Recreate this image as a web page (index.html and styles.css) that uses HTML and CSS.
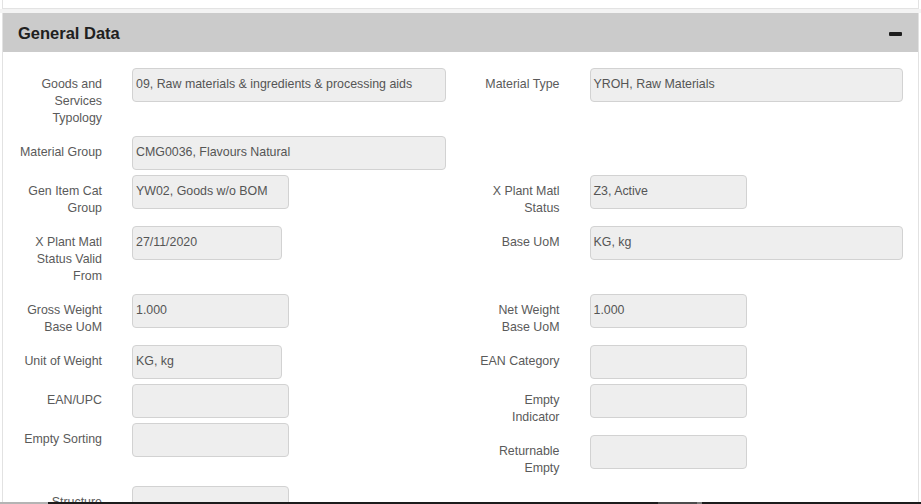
FILE: index.html
```html
<!DOCTYPE html>
<html lang="en">
<head>
<meta charset="utf-8">
<title>General Data</title>
<link rel="stylesheet" href="styles.css">
</head>
<body>
<div class="page">
  <div class="top-box"></div>
  <div class="band"></div>
  <section class="panel">
    <header class="panel-head">
      <h2 class="panel-title">General Data</h2>
      <span class="collapse-icon" aria-label="Collapse"></span>
    </header>
    <div class="panel-body">
      <div class="form-row">
        <div class="field">
          <label class="field-label">Goods and Services Typology</label>
          <div class="control"><div class="input">09, Raw materials &amp; ingredients &amp; processing aids</div></div>
        </div>
        <div class="field">
          <label class="field-label">Material Type</label>
          <div class="control"><div class="input">YROH, Raw Materials</div></div>
        </div>
      </div>
      <div class="form-row">
        <div class="field">
          <label class="field-label">Material Group</label>
          <div class="control"><div class="input">CMG0036, Flavours Natural</div></div>
        </div>
        <div></div>
      </div>
      <div class="form-row">
        <div class="field">
          <label class="field-label">Gen Item Cat Group</label>
          <div class="control"><div class="input w157">YW02, Goods w/o BOM</div></div>
        </div>
        <div class="field">
          <label class="field-label">X Plant Matl Status</label>
          <div class="control"><div class="input w157">Z3, Active</div></div>
        </div>
      </div>
      <div class="form-row">
        <div class="field">
          <label class="field-label">X Plant Matl Status Valid From</label>
          <div class="control"><div class="input w150">27/11/2020</div></div>
        </div>
        <div class="field">
          <label class="field-label">Base UoM</label>
          <div class="control"><div class="input">KG, kg</div></div>
        </div>
      </div>
      <div class="form-row">
        <div class="field">
          <label class="field-label">Gross Weight Base UoM</label>
          <div class="control"><div class="input w157">1.000</div></div>
        </div>
        <div class="field">
          <label class="field-label">Net Weight Base UoM</label>
          <div class="control"><div class="input w157">1.000</div></div>
        </div>
      </div>
      <div class="form-row">
        <div class="field">
          <label class="field-label">Unit of Weight</label>
          <div class="control"><div class="input w150">KG, kg</div></div>
        </div>
        <div class="field">
          <label class="field-label">EAN Category</label>
          <div class="control"><div class="input w157"></div></div>
        </div>
      </div>
      <div class="form-row">
        <div class="stack">
          <div class="field">
            <label class="field-label">EAN/UPC</label>
            <div class="control"><div class="input w157"></div></div>
          </div>
          <div class="field">
            <label class="field-label">Empty Sorting</label>
            <div class="control"><div class="input w157"></div></div>
          </div>
        </div>
        <div class="stack">
          <div class="field">
            <label class="field-label">Empty Indicator</label>
            <div class="control"><div class="input w157"></div></div>
          </div>
          <div class="field">
            <label class="field-label">Returnable Empty</label>
            <div class="control"><div class="input w157"></div></div>
          </div>
        </div>
      </div>
      <div class="form-row">
        <div class="field">
          <label class="field-label">Structure Category</label>
          <div class="control"><div class="input w157"></div></div>
        </div>
        <div></div>
      </div>
    </div>
  </section>
  <div class="status-bar">
    <span class="sb-left"></span>
    <span class="sb-dark"><span class="sb-thumb"></span></span>
  </div>
</div>
</body>
</html>
```

FILE: styles.css
```css
* { box-sizing: border-box; }

html, body {
  margin: 0;
  padding: 0;
  background: #ffffff;
}

.page {
  width: 921px;
  height: 504px;
  display: flex;
  flex-direction: column;
  overflow: hidden;
  font-family: "Liberation Sans", Arial, sans-serif;
}

.top-box {
  height: 9px;
  margin-left: 2px;
  width: 917px;
  border: 1px solid #e3e3e3;
  border-top: none;
  background: #ffffff;
  flex: none;
}

.band {
  height: 4px;
  background: #f3f3f3;
  flex: none;
}

.panel {
  flex: 1;
  min-height: 0;
  display: flex;
  flex-direction: column;
  margin-left: 2px;
  width: 917px;
  border-left: 1px solid #e2e2e2;
  border-right: 1px solid #e2e2e2;
}

.panel-head {
  height: 39px;
  flex: none;
  background: #cbcbcb;
  display: flex;
  align-items: center;
  justify-content: space-between;
  padding: 2px 16px 0 15px;
}

.panel-title {
  margin: 0;
  font-size: 16.5px;
  font-weight: bold;
  color: #202020;
}

.collapse-icon {
  width: 13px;
  height: 4px;
  background: #1e1e1e;
  border-radius: 1px;
}

.panel-body {
  flex: 1;
  min-height: 0;
  overflow: hidden;
  padding-top: 16px;
  background: #ffffff;
}

.form-row {
  display: grid;
  grid-template-columns: 1fr 1fr;
  align-items: start;
}

.stack {
  display: flex;
  flex-direction: column;
}

.field {
  display: flex;
  align-items: flex-start;
  margin-bottom: 5px;
}

.field-label {
  width: 84px;
  flex: none;
  margin-left: 15px;
  margin-right: 30px;
  padding: 8px 0 4px;
  text-align: right;
  font-size: 12.4px;
  line-height: 17px;
  color: #5a5a5a;
}

.control {
  flex: 1;
  padding-right: 15px;
}

.input {
  height: 34px;
  width: 100%;
  background: #eeeeee;
  border: 1px solid #d2d2d2;
  border-radius: 4px;
  padding: 5px 3px;
  font-size: 12.4px;
  line-height: 20px;
  color: #555555;
  white-space: nowrap;
  overflow: hidden;
}

.input.w157 { width: 157px; }
.input.w150 { width: 150px; }

.status-bar {
  height: 2px;
  flex: none;
  display: flex;
}

.sb-left {
  width: 48px;
  background: #b4b4b4;
}

.sb-dark {
  flex: 1;
  background: #1c1c1c;
  padding-left: 610px;
  display: flex;
}

.sb-thumb {
  width: 44px;
  background: #4c4c4c;
  border-right: 5px solid #7a7a7a;
}
```
